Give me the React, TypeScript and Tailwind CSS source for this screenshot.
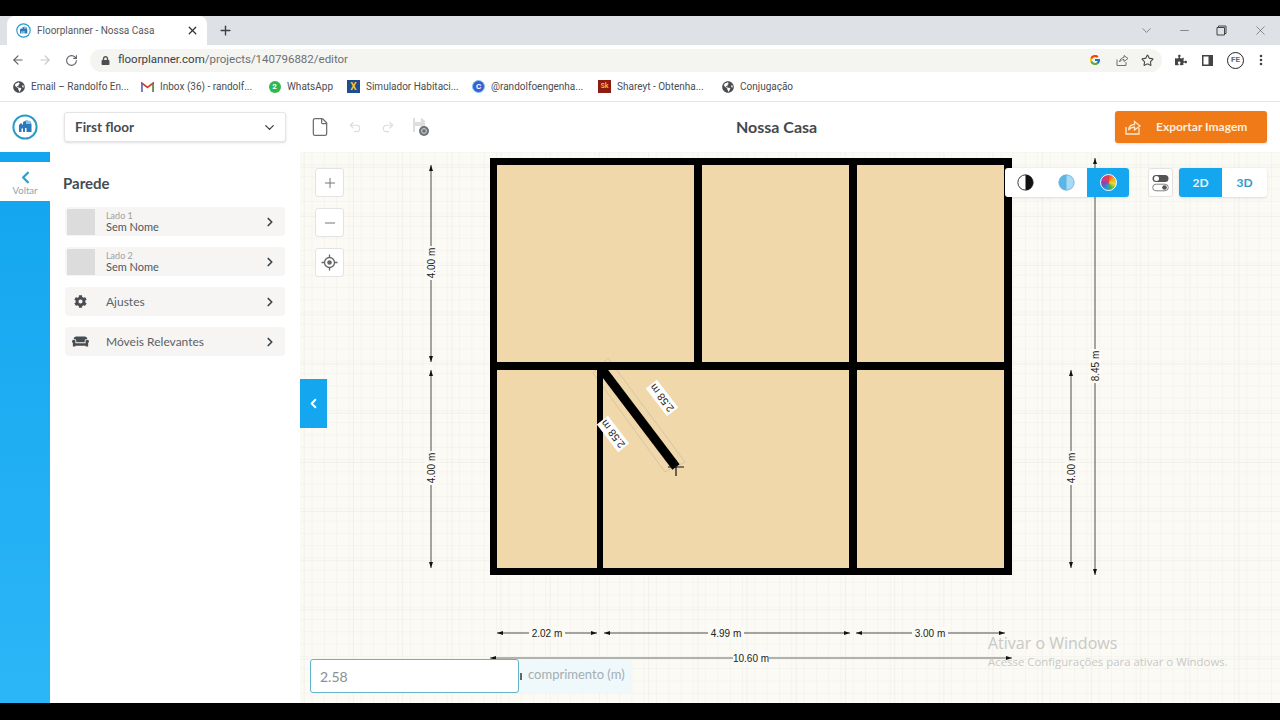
import React from "react";
import { ArrowLeft, ArrowRight, RotateCw, Star, X, Plus, Minus, ChevronDown, ChevronRight, ChevronLeft, File, Undo2, Redo2 } from "lucide-react";
import { FaCog, FaCouch, FaLock, FaPuzzlePiece, FaGlobeAmericas } from "react-icons/fa";
import { FcGoogle } from "react-icons/fc";

const Logo = ({ s = 26 }: { s?: number }) => (
  <svg width={s} height={s} viewBox="0 0 26 26">
    <circle cx="13" cy="13" r="11.6" fill="#fff" stroke="#2a9cc4" strokeWidth="2" />
    <path d="M7 11 L9 9 L11 11 L11 8 L14 6.5 L18 7 L19.5 10 V18 H14.5 V14 H13 V18 H11 V14.5 H9.5 V18 H7 Z" fill="#2d78b8" />
    <path d="M14 6.5 L18 7 L19 10 H14 Z" fill="#7cc6e6" />
  </svg>
);

const Globe = () => <FaGlobeAmericas className="text-[#4a4d51]" size={12} />;

const Bookmark = ({ icon, label, w }: { icon: React.ReactNode; label: string; w: number }) => (
  <div className="flex items-center gap-[6px] text-[10px] text-[#4a4d51] shrink-0" style={{ width: w }}>
    <span className="w-[13px] flex justify-center shrink-0">{icon}</span>
    <span className="whitespace-nowrap">{label}</span>
  </div>
);

const PanelRow = ({ left, children }: { left: React.ReactNode; children: React.ReactNode }) => (
  <div className="flex items-center h-[29px] bg-[#f6f5f3] rounded-sm pr-[8px]">
    <div className="w-[41px] h-full flex items-center pl-[2px] shrink-0">{left}</div>
    <div className="flex-1 min-w-0">{children}</div>
    <ChevronRight size={14} strokeWidth={3} className="text-[#3f464c]" />
  </div>
);

const Swatch = () => <div className="w-[28px] h-[26px] bg-[#dcdcdc]" />;

const MapBtn = ({ children }: { children: React.ReactNode }) => (
  <div className="w-[29px] h-[29px] bg-white border border-[#e3e3e3] rounded-[3px] flex items-center justify-center text-[#777]">{children}</div>
);

const HDim = ({ x1, x2, y, cx, label, thick }: { x1: number; x2: number; y: number; cx: number; label: string; thick?: boolean }) => (
  <g>
    <line x1={x1} x2={x2} y1={y} y2={y} stroke={thick ? "#9a9a9a" : "#222"} strokeWidth={thick ? 1.5 : 0.8} />
    <path d={`M${x1} ${y} l6 -2 v4 Z M${x2} ${y} l-6 -2 v4 Z`} fill="#111" />
    <rect x={cx - 18} y={y - 6} width="36" height="12" fill="#fbfaf5" />
    <text x={cx} y={y + 3.5} textAnchor="middle" fontSize="10" fill="#222" fontFamily="Liberation Sans, sans-serif">{label}</text>
  </g>
);

const VDim = ({ y1, y2, x, cy, label }: { y1: number; y2: number; x: number; cy: number; label: string }) => (
  <g>
    <line x1={x} x2={x} y1={y1} y2={y2} stroke="#222" strokeWidth="0.8" />
    <path d={`M${x} ${y1} l-2 6 h4 Z M${x} ${y2} l-2 -6 h4 Z`} fill="#111" />
    <g transform={`translate(${x} ${cy}) rotate(-90)`}>
      <rect x="-17" y="-6" width="34" height="12" fill="#fbfaf5" />
      <text y="3.5" textAnchor="middle" fontSize="10" fill="#222" fontFamily="Liberation Sans, sans-serif">{label}</text>
    </g>
  </g>
);

const DiagLabel = ({ x, y }: { x: number; y: number }) => (
  <g transform={`translate(${x} ${y}) rotate(232.5)`}>
    <rect x="-17.5" y="-7" width="35" height="14" fill="#fff" />
    <text y="3.5" textAnchor="middle" fontSize="10.5" fill="#222" fontFamily="Liberation Sans, sans-serif">2.58 m</text>
  </g>
);

const Plan = () => (
  <svg className="absolute inset-0 w-full h-full" viewBox="300 152 980 551">
    <defs>
      <pattern id="minor" x="5" y="5" width="12.3" height="12.3" patternUnits="userSpaceOnUse">
        <path d="M12.3 0V12.3H0" fill="none" stroke="#f0efe8" strokeWidth="1" />
      </pattern>
      <pattern id="major" x="9.5" y="20" width="49.2" height="49.2" patternUnits="userSpaceOnUse">
        <path d="M49.2 0V49.2H0" fill="none" stroke="#e9e8e0" strokeWidth="1" />
      </pattern>
    </defs>
    <rect x="300" y="152" width="980" height="551" fill="#fbfaf5" />
    <rect x="300" y="152" width="980" height="551" fill="url(#minor)" />
    <rect x="300" y="152" width="980" height="551" fill="url(#major)" />

    <rect x="490" y="158" width="522" height="417" fill="#000" />
    <rect x="497" y="165" width="197" height="197" fill="#f0d8aa" />
    <rect x="702" y="165" width="147" height="197" fill="#f0d8aa" />
    <rect x="857" y="165" width="147" height="197" fill="#f0d8aa" />
    <rect x="497" y="370" width="100" height="198" fill="#f0d8aa" />
    <rect x="603" y="370" width="246" height="198" fill="#f0d8aa" />
    <rect x="857" y="370" width="147" height="198" fill="#f0d8aa" />

    <path d="M593 373 L608 358 L685 462 L665 472 Z" fill="none" stroke="#d3c7ae" strokeWidth="1" />
    <rect x="497" y="362" width="352" height="8" fill="#000" />
    <rect x="597" y="362" width="6" height="30" fill="#000" />
    <line x1="601" y1="368" x2="676" y2="467" stroke="#000" strokeWidth="9" />
    <path d="M676 460 V476 M668 467 H684" stroke="#111" strokeWidth="1.2" />
    <DiagLabel x={662} y={398} />
    <DiagLabel x={613} y={434} />

    <VDim x={431} y1={165} y2={362} cy={263} label="4.00 m" />
    <VDim x={431} y1={370} y2={568} cy={468} label="4.00 m" />
    <VDim x={1071} y1={370} y2={568} cy={468} label="4.00 m" />
    <VDim x={1095} y1={158} y2={575} cy={366} label="8.45 m" />
    <HDim x1={497} x2={597} y={633} cx={547} label="2.02 m" />
    <HDim x1={604} x2={850} y={633} cx={726} label="4.99 m" />
    <HDim x1={856} x2={1005} y={633} cx={930} label="3.00 m" />
    <HDim x1={490} x2={1012} y={658} cx={751} label="10.60 m" thick />
  </svg>
);

export default function App() {
  return (
    <div className="w-full h-[720px] bg-black overflow-hidden flex flex-col pt-4 pb-[17px]" style={{ fontFamily: "Lato, sans-serif" }}>
      {/* Browser tab strip */}
      <div className="h-[29px] bg-[#dee1e6] flex items-end pl-[7px] shrink-0" style={{ fontFamily: "Roboto, sans-serif" }}>
        <div className="w-[200px] h-[29px] bg-white rounded-t-lg flex items-center pl-[9px] pr-[8px]">
          <Logo s={15} />
          <span className="ml-[6px] flex-1 text-[10px] text-[#55585c] whitespace-nowrap">Floorplanner - Nossa Casa</span>
          <X size={13} strokeWidth={2.4} className="text-[#333]" />
        </div>
        <div className="ml-[11px] h-full flex items-center"><Plus size={15} strokeWidth={2.2} className="text-[#3c4043]" /></div>
        <div className="ml-auto h-full flex items-center text-[#555] pr-[12px]">
          <ChevronDown size={15} strokeWidth={1} className="mr-[24px]" />
          <Minus size={13} strokeWidth={1.2} className="mr-[25px]" />
          <svg width="11" height="11" viewBox="0 0 11 11" className="mr-[26px]"><path d="M2.5 2.5V1h7.5v7.5H8.5M1 2.5h7.5V10H1Z" fill="none" stroke="#444" strokeWidth="1" /></svg>
          <X size={15} strokeWidth={1} />
        </div>
      </div>

      {/* Browser toolbar */}
      <div className="h-[27px] bg-white flex items-center shrink-0 pt-[3px]" style={{ fontFamily: "Roboto, sans-serif" }}>
        <div className="flex items-center pl-[11px] w-[90px] shrink-0">
          <ArrowLeft size={14} className="text-[#5f6368]" />
          <ArrowRight size={14} className="text-[#c4c7c9] ml-[13px]" />
          <RotateCw size={13} className="text-[#5f6368] ml-[13px]" />
        </div>
        <div className="w-[1072px] h-[23px] bg-[#f4f4f0] rounded-full flex items-center pl-[11px] pr-[8px] shrink-0">
          <FaLock size={9} className="text-[#4d4f52]" />
          <span className="ml-[8px] text-[11.5px] text-[#3c4043]">floorplanner.com<span className="text-[#6d7175]">/projects/140796882/editor</span></span>
          <FcGoogle size={12} className="ml-auto" />
          <svg width="14" height="14" viewBox="0 0 14 14" className="ml-[14px]"><path d="M2 6.5V12.5H11V9M4.5 9C5 6 7 4.5 9 4.5V2.5L13 5.5L9 8.5V6.5C7 6.5 5.5 7.5 4.5 9Z" fill="none" stroke="#6d7175" strokeWidth="1" /></svg>
          <Star size={13} className="ml-[12px] text-[#444]" />
        </div>
        <div className="flex items-center flex-1 pl-[13px]">
          <FaPuzzlePiece size={12} className="text-[#444]" />
          <svg width="11" height="11" viewBox="0 0 11 11" className="ml-[15px]"><path d="M0 0H11V11H0Z M1.5 1.5V9.5H6.5V1.5Z" fillRule="evenodd" fill="#444" /></svg>
          <div className="ml-[14px] w-[17px] h-[17px] rounded-full border-[1.5px] border-[#222] bg-white flex items-center justify-center text-[8px] font-bold text-[#666]">FE</div>
          <svg width="4" height="12" viewBox="0 0 4 12" className="ml-[15px]"><circle cx="2" cy="2" r="1.3" fill="#444" /><circle cx="2" cy="6" r="1.3" fill="#444" /><circle cx="2" cy="10" r="1.3" fill="#444" /></svg>
        </div>
      </div>

      {/* Bookmarks */}
      <div className="h-[30px] bg-white border-b border-[#e4e4e4] flex items-center pl-[12px] shrink-0" style={{ fontFamily: "Roboto, sans-serif" }}>
        <Bookmark w={129} icon={<Globe />} label="Email – Randolfo En..." />
        <Bookmark w={127} label="Inbox (36) - randolf..." icon={
          <svg width="13" height="10" viewBox="0 0 13 10"><path d="M0.8 10V1L6.5 5.5L12.2 1V10" fill="none" stroke="#d93a2e" strokeWidth="1.6" /><path d="M0.8 10V2" stroke="#4285f4" strokeWidth="1.6" /><path d="M12.2 10V2" stroke="#34a853" strokeWidth="1.6" /></svg>
        } />
        <Bookmark w={79} label="WhatsApp" icon={
          <span className="w-[12px] h-[12px] rounded-full bg-[#2fb84f] text-white text-[8px] font-bold flex items-center justify-center">2</span>
        } />
        <Bookmark w={125} label="Simulador Habitaci..." icon={
          <span className="w-[13px] h-[13px] bg-[#1f4e8c] text-[#f2c230] text-[10px] font-bold flex items-center justify-center">X</span>
        } />
        <Bookmark w={126} label="@randolfoengenha..." icon={
          <span className="w-[13px] h-[13px] rounded-full bg-[#3d5fd6] border border-[#7bc6e8] text-white text-[8px] font-bold flex items-center justify-center">C</span>
        } />
        <Bookmark w={123} label="Shareyt - Obtenha..." icon={
          <span className="w-[13px] h-[13px] bg-[#8c1c12] text-[#f4b73c] text-[7px] font-bold flex items-center justify-center">Sk</span>
        } />
        <Bookmark w={90} icon={<Globe />} label="Conjugação" />
      </div>

      {/* App header */}
      <div className="h-[50px] bg-white flex items-center relative shrink-0 pl-[12px] pr-[13px]">
        <Logo s={26} />
        <div className="ml-[26px] w-[222px] h-[30px] bg-white border border-[#e4e4e4] rounded-[3px] shadow-sm flex items-center pl-[10px] pr-[8px]">
          <span className="flex-1 text-[13.5px] font-bold text-[#454c52]">First floor</span>
          <ChevronDown size={15} strokeWidth={2.2} className="text-[#444]" />
        </div>
        <File size={20} strokeWidth={1.5} className="ml-[24px] text-[#6b6f72]" />
        <Undo2 size={14} className="ml-[18px] text-[#dcdcdc]" />
        <Redo2 size={14} className="ml-[19px] text-[#dcdcdc]" />
        <svg width="20" height="20" viewBox="0 0 20 20" className="ml-[16px]">
          <path d="M2 1H11L14 4V15H2Z M4 1V5H10V1Z M4 9V15H10V9Z" fillRule="evenodd" fill="#dedede" />
          <circle cx="13" cy="14" r="5" fill="#6f7477" />
          <circle cx="13" cy="14" r="2.4" fill="none" stroke="#d8d8d8" strokeWidth="1" />
        </svg>
        <div className="absolute left-[736px] text-[16px] font-bold text-[#44494e] whitespace-nowrap">Nossa Casa</div>
        <div className="ml-auto w-[152px] h-[32px] bg-[#ef7a17] rounded-[3px] flex items-center pl-[9px] text-[#fdeedd] shadow-sm">
          <svg width="18" height="18" viewBox="0 0 18 18" fill="none" stroke="#fde8d0" strokeWidth="1.3">
            <path d="M2 9V16H15V10" />
            <path d="M4.5 12C5 8.5 7.5 6.5 10.5 6.5V3.5L16 8L10.5 12V9.2C8 9.2 6 10 4.5 12Z" />
          </svg>
          <span className="ml-[14px] text-[12px] font-bold whitespace-nowrap">Exportar Imagem</span>
        </div>
      </div>

      {/* Body */}
      <div className="flex-1 flex min-h-0">
        <div className="w-[50px] shrink-0 bg-gradient-to-b from-[#10a5ee] to-[#2bb6f7] pt-[10px]">
          <div className="h-[39px] bg-white flex flex-col items-center pt-[6px]">
            <ChevronLeft size={19} strokeWidth={3} className="text-[#2aa0cf]" />
            <span className="text-[9.5px] leading-[9px] mt-[-1px] text-[#8fa3ad]">Voltar</span>
          </div>
        </div>
        <div className="w-[250px] shrink-0 bg-white pl-[15px] pr-[15px] pt-[20px] flex flex-col">
          <div className="text-[15px] leading-[22px] font-bold text-[#454c52] ml-[-2px]">Parede</div>
          <div className="mt-[13px] flex flex-col gap-[11px]">
            <PanelRow left={<Swatch />}>
              <div className="text-[9px] leading-[10px] text-[#a0a0a0]">Lado 1</div>
              <div className="text-[11px] leading-[12px] text-[#51575c]">Sem Nome</div>
            </PanelRow>
            <PanelRow left={<Swatch />}>
              <div className="text-[9px] leading-[10px] text-[#a0a0a0]">Lado 2</div>
              <div className="text-[11px] leading-[12px] text-[#51575c]">Sem Nome</div>
            </PanelRow>
            <PanelRow left={<span className="pl-[7px]"><FaCog size={13} className="text-[#484d52]" /></span>}>
              <div className="text-[12px] text-[#5b6165]">Ajustes</div>
            </PanelRow>
            <PanelRow left={<span className="pl-[5px]"><FaCouch size={17} className="text-[#484d52]" /></span>}>
              <div className="text-[12px] text-[#5b6165]">Móveis Relevantes</div>
            </PanelRow>
          </div>
        </div>

        <div className="flex-1 relative overflow-hidden bg-[#fbfaf5]">
          <Plan />
          <div className="absolute left-[15px] top-[16px] flex flex-col gap-[11px]">
            <MapBtn><Plus size={16} strokeWidth={1.5} /></MapBtn>
            <MapBtn><Minus size={16} strokeWidth={1.5} /></MapBtn>
            <MapBtn>
              <svg width="17" height="17" viewBox="0 0 17 17" fill="none" stroke="#666" strokeWidth="1.3">
                <circle cx="8.5" cy="8.5" r="5" />
                <circle cx="8.5" cy="8.5" r="2.3" fill="#666" stroke="none" />
                <path d="M8.5 0.5V3.5M8.5 13.5V16.5M0.5 8.5H3.5M13.5 8.5H16.5" />
              </svg>
            </MapBtn>
          </div>
          <div className="absolute left-0 top-[227px] w-[27px] h-[49px] bg-[#14a6ee] flex items-center justify-center">
            <ChevronLeft size={15} strokeWidth={3.2} className="text-white" />
          </div>

          <div className="absolute left-[705px] top-[16px] flex items-stretch h-[29px]">
            <div className="flex bg-white rounded-[3px] overflow-hidden shadow-sm w-[124px]">
              <div className="flex-1 flex items-center justify-center pr-[1px]">
                <svg width="17" height="17" viewBox="0 0 16 16"><circle cx="8" cy="8" r="7.2" fill="#fff" stroke="#333" strokeWidth="0.9" /><path d="M8 0.8A7.2 7.2 0 0 1 8 15.2Z" fill="#111" /></svg>
              </div>
              <div className="flex-1 flex items-center justify-center">
                <svg width="17" height="17" viewBox="0 0 16 16"><circle cx="8" cy="8" r="7.2" fill="#a9daf5" stroke="#6fb7dc" strokeWidth="0.9" /><path d="M8 0.8A7.2 7.2 0 0 0 8 15.2Z" fill="#5cb5e6" /></svg>
              </div>
              <div className="w-[42px] bg-[#14a6ee] flex items-center justify-center">
                <div className="w-[17px] h-[17px] rounded-full border border-white" style={{ background: "conic-gradient(#e8413a, #f2a51f, #e9dc2e, #47b54a, #2b8fd6, #7a4bb8, #d8358a, #e8413a)" }} />
              </div>
            </div>
            <div className="ml-[19px] w-[25px] bg-white border border-[#e3e3e3] rounded-[3px] flex items-center justify-center">
              <svg width="17" height="18" viewBox="0 0 17 18">
                <rect x="0.5" y="1" width="16" height="7" rx="3.5" fill="#555" />
                <circle cx="4.5" cy="4.5" r="2.5" fill="#fff" />
                <rect x="0.7" y="10.2" width="15.6" height="6.6" rx="3.3" fill="#fff" stroke="#666" strokeWidth="0.8" />
                <circle cx="12.5" cy="13.5" r="2.3" fill="#555" />
              </svg>
            </div>
            <div className="ml-[6px] w-[88px] flex bg-white rounded-[3px] overflow-hidden shadow-sm text-[12px] font-bold">
              <div className="w-[43px] bg-[#14a6ee] text-[#e6f6fe] flex items-center justify-center">2D</div>
              <div className="flex-1 text-[#2f9ac9] flex items-center justify-center">3D</div>
            </div>
          </div>

          <div className="absolute left-[10px] top-[507px] flex h-[34px]">
            <div className="w-[209px] bg-white border border-[#62b4c9] rounded-[3px] flex items-center pl-[9px] text-[14px] text-[#8b8f92]">2.58</div>
            <div className="w-[113px] bg-[#eff8fa] flex items-center pb-[3px] text-[13px] text-[#a3aeb3]">
              <div className="w-[2px] h-[7px] bg-[#666] ml-[1px] mr-[6px] mt-[3px]" />
              comprimento (m)
            </div>
          </div>

          <div className="absolute left-[688px] top-[481px] text-[#c9c9c5] pointer-events-none" style={{ fontFamily: "Open Sans, sans-serif" }}>
            <div className="text-[16px] leading-[20px]">Ativar o Windows</div>
            <div className="text-[11.4px] leading-[18px] whitespace-nowrap">Acesse Configurações para ativar o Windows.</div>
          </div>
        </div>
      </div>
    </div>
  );
}
